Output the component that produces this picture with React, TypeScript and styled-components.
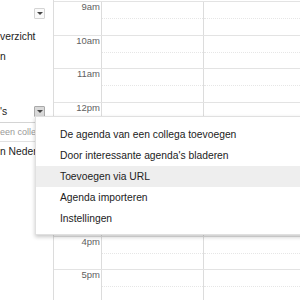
import React from 'react';
import styled, { createGlobalStyle } from 'styled-components';

const GlobalStyle = createGlobalStyle`
  html, body {
    margin: 0;
    padding: 0;
    background: #fff;
    overflow: hidden;
  }
  body {
    font-family: "Liberation Sans", Arial, sans-serif;
    color: #222;
  }
`;

const Page = styled.div`
  position: relative;
  display: flex;
  width: 300px;
  height: 300px;
  overflow: hidden;
`;

const Sidebar = styled.div`
  width: 53px;
  flex-shrink: 0;
  display: flex;
  flex-direction: column;
  overflow: hidden;
  font-size: 10.3px;
`;

const SectionHeader = styled.div<{ $height: number }>`
  height: ${(p) => p.$height}px;
  display: flex;
  align-items: center;
  justify-content: space-between;
  padding-right: 8px;
  white-space: nowrap;
`;

const DropButton = styled.div<{ $active?: boolean }>`
  width: 11px;
  height: 11px;
  box-sizing: border-box;
  margin-left: auto;
  display: flex;
  align-items: center;
  justify-content: center;
  border: 1px solid ${(p) => (p.$active ? '#a9a9a9' : '#d4d4d4')};
  background: ${(p) => (p.$active ? '#d9d9d9' : '#fafafa')};
  border-radius: 1px;

  &::after {
    content: '';
    border-left: 3px solid transparent;
    border-right: 3px solid transparent;
    border-top: 3px solid #444;
  }
`;

const SideItem = styled.div`
  height: 20px;
  line-height: 20px;
  white-space: nowrap;
`;

const Spacer = styled.div<{ $h: number }>`
  height: ${(p) => p.$h}px;
`;

const SearchBox = styled.div`
  height: 20px;
  line-height: 19px;
  box-sizing: border-box;
  border-top: 1px solid #d4d4d4;
  border-bottom: 1px solid #e2e2e2;
  font-size: 9px;
  color: #999;
  white-space: nowrap;
`;

const Grid = styled.div`
  flex: 1;
  border-left: 1px solid #dcdcdc;
  padding-top: 1px;
`;

const HourRow = styled.div`
  display: flex;
  height: 33.5px;
  box-sizing: border-box;
  border-top: 1px solid #e3e3e3;
`;

const TimeLabel = styled.div`
  width: 46px;
  flex-shrink: 0;
  text-align: right;
  padding-right: 1px;
  line-height: 10px;
  font-size: 9.5px;
  color: #5f5f5f;
`;

const DayCell = styled.div<{ $width?: number }>`
  position: relative;
  ${(p) => (p.$width ? `width: ${p.$width}px;` : 'flex: 1;')}
  flex-shrink: 0;
  border-left: 1px solid #dcdcdc;

  &::after {
    content: '';
    position: absolute;
    left: 0;
    right: 0;
    top: 16px;
    border-top: 1px dotted #e6e6e6;
  }
`;

const Menu = styled.div`
  position: absolute;
  left: 35px;
  top: 116px;
  right: -10px;
  padding: 7px 0 5px;
  background: #fff;
  border: 1px solid rgba(0, 0, 0, 0.12);
  box-shadow: 0 2px 4px rgba(0, 0, 0, 0.22);
  font-size: 10.3px;
  color: #222;
`;

const MenuItem = styled.div<{ $hover?: boolean }>`
  height: 21px;
  line-height: 21px;
  padding-left: 24px;
  white-space: nowrap;
  background: ${(p) => (p.$hover ? '#eeeeee' : 'transparent')};
`;

const hours = ['9am', '10am', '11am', '12pm', '1pm', '2pm', '3pm', '4pm', '5pm'];

const menuItems = [
  'De agenda van een collega toevoegen',
  "Door interessante agenda's bladeren",
  'Toevoegen via URL',
  'Agenda importeren',
  'Instellingen',
];

export default function App() {
  return (
    <Page>
      <GlobalStyle />
      <Sidebar>
        <SectionHeader $height={27}>
          <DropButton />
        </SectionHeader>
        <SideItem>verzicht</SideItem>
        <SideItem>n</SideItem>
        <Spacer $h={34} />
        <SectionHeader $height={21}>
          <span>'s</span>
          <DropButton $active />
        </SectionHeader>
        <SearchBox>een collega toevoegen</SearchBox>
        <SideItem>n Nederland</SideItem>
      </Sidebar>
      <Grid>
        {hours.map((h) => (
          <HourRow key={h}>
            <TimeLabel>{h}</TimeLabel>
            <DayCell $width={101} />
            <DayCell />
          </HourRow>
        ))}
      </Grid>
      <Menu>
        {menuItems.map((m) => (
          <MenuItem key={m} $hover={m === 'Toevoegen via URL'}>
            {m}
          </MenuItem>
        ))}
      </Menu>
    </Page>
  );
}
